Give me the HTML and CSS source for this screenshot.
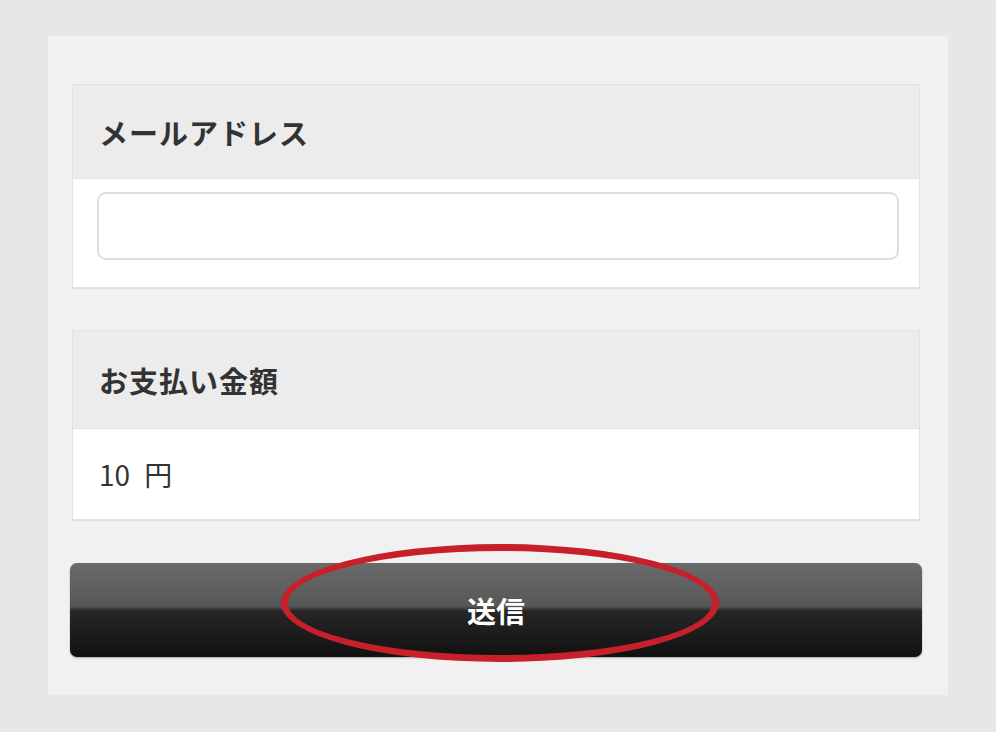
FILE: index.html
```html
<!DOCTYPE html>
<html lang="ja">
<head>
<meta charset="utf-8">
<link rel="stylesheet" href="styles.css">
</head>
<body>
<div class="panel">
  <section class="card card-mail">
    <div class="card-head">メールアドレス</div>
    <div class="card-body">
      <input class="text-input" type="email">
    </div>
  </section>
  <section class="card card-pay">
    <div class="card-head">お支払い金額</div>
    <div class="card-body amount">10 円</div>
  </section>
  <div class="button-wrap">
    <button class="submit">送信</button>
    <span class="mark"></span>
  </div>
</div>
</body>
</html>
```
FILE: styles.css
```css
html, body {
  margin: 0;
  padding: 0;
}
body {
  background: #e6e8e7;
  width: 996px;
  height: 732px;
  overflow: hidden;
  font-family: "Noto Sans CJK JP", "Noto Sans", sans-serif;
}
.panel {
  box-sizing: border-box;
  margin: 36px 0 0 48px;
  width: 900px;
  height: 659px;
  background: #f1f1f1;
  padding: 48px 26px 0 22px;
  display: flex;
  flex-direction: column;
}
.card {
  margin: 0 2px;
  border: 1px solid #e2e2e2;
  box-shadow: 0 1px 1px rgba(0,0,0,0.08);
  background: #fff;
  display: flex;
  flex-direction: column;
}
.card-head {
  background: #ececec;
  border-bottom: 1px solid #e3e3e3;
  color: #333;
  font-weight: bold;
  font-size: 29px;
  letter-spacing: 1px;
  padding-left: 26px;
  display: flex;
  align-items: center;
}
.card-mail { height: 204px; box-sizing: border-box; }
.card-mail .card-head { height: 93px; }
.card-mail .card-body {
  padding: 13px 20px 0 24px;
}
.text-input {
  display: block;
  box-sizing: border-box;
  width: 100%;
  height: 68px;
  border: 2px solid #dedede;
  border-radius: 9px;
  background: #fff;
  outline: none;
}
.card-pay {
  margin-top: 42px;
  height: 190px;
  box-sizing: border-box;
}
.card-pay .card-head { height: 97px; }
.amount {
  flex: 1;
  display: flex;
  align-items: center;
  padding-left: 26px;
  font-size: 28px;
  color: #333;
  word-spacing: 8px;
  white-space: pre;
}
.button-wrap {
  position: relative;
  margin-top: 43px;
}
.submit {
  display: block;
  width: 100%;
  height: 94px;
  border: none;
  border-radius: 7px;
  background: linear-gradient(to bottom, #6a6a6a 0%, #575757 46%, #262626 51%, #111 100%);
  box-shadow: 0 1px 2px rgba(0,0,0,0.3);
  color: #fff;
  font-family: "Noto Sans CJK JP", sans-serif;
  font-weight: bold;
  font-size: 29px;
  padding: 0;
}
.mark {
  position: absolute;
  left: 211px;
  top: -19px;
  width: 438px;
  height: 118px;
  box-sizing: border-box;
  border: 7px solid #c8202a;
  border-radius: 50%;
  pointer-events: none;
}
```
